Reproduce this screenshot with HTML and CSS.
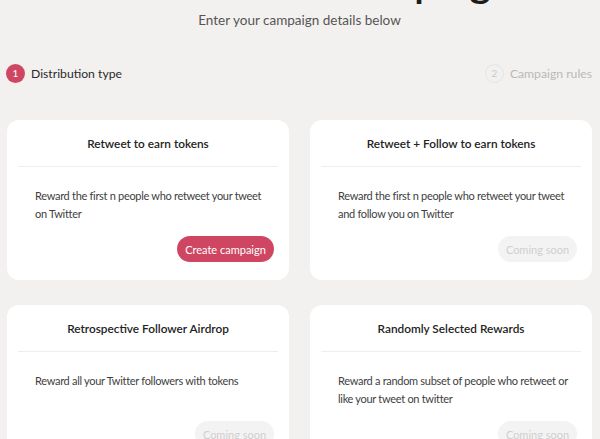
FILE: index.html
```html
<!DOCTYPE html>
<html>
<head>
<meta charset="utf-8">
<link rel="stylesheet" href="styles.css">
</head>
<body>
<main class="page">
  <h1 class="title">Create a new campaign</h1>
  <p class="subtitle">Enter your campaign details below</p>
  <div class="steps">
    <div class="step step-active"><span class="step-num">1</span><span class="step-label">Distribution type</span></div>
    <div class="step step-idle"><span class="step-num">2</span><span class="step-label">Campaign rules</span></div>
  </div>
  <section class="grid">
    <article class="card">
      <h2 class="card-title">Retweet to earn tokens</h2>
      <div class="card-body">
        <p class="card-text">Reward the first n people who retweet your tweet on Twitter</p>
        <button class="btn btn-primary">Create campaign</button>
      </div>
    </article>
    <article class="card">
      <h2 class="card-title">Retweet + Follow to earn tokens</h2>
      <div class="card-body">
        <p class="card-text">Reward the first n people who retweet your tweet and follow you on Twitter</p>
        <button class="btn btn-disabled">Coming soon</button>
      </div>
    </article>
    <article class="card">
      <h2 class="card-title">Retrospective Follower Airdrop</h2>
      <div class="card-body">
        <p class="card-text">Reward all your Twitter followers with tokens</p>
        <button class="btn btn-disabled">Coming soon</button>
      </div>
    </article>
    <article class="card">
      <h2 class="card-title">Randomly Selected Rewards</h2>
      <div class="card-body">
        <p class="card-text">Reward a random subset of people who retweet or like your tweet on twitter</p>
        <button class="btn btn-disabled">Coming soon</button>
      </div>
    </article>
  </section>
</main>
</body>
</html>
```
FILE: styles.css
```css
* { box-sizing: border-box; }
html, body { margin: 0; padding: 0; }
body {
  background: #f3f1ef;
  font-family: Lato, "Open Sans", sans-serif;
  color: #2b2b2b;
  overflow: hidden;
}
.page {
  padding: 0 8px 0 7px;
}
.title {
  margin: -44px 0 0;
  height: 55px;
  font-size: 42px;
  line-height: 50px;
  font-weight: 600;
  text-align: center;
  color: #1c1c1c;
  white-space: nowrap;
}
.subtitle {
  margin: 0;
  font-size: 13.5px;
  line-height: 18px;
  text-align: center;
  color: #555;
}
.steps {
  display: flex;
  justify-content: space-between;
  align-items: center;
  margin-top: 35px;
  height: 18px;
}
.step {
  display: flex;
  align-items: center;
  gap: 6px;
}
.step-num {
  width: 19px;
  height: 19px;
  border-radius: 50%;
  display: flex;
  align-items: center;
  justify-content: center;
  font-size: 10px;
}
.step-active .step-num {
  background: #cf4663;
  color: #fff;
  margin-left: -1px;
}
.step-active .step-label {
  font-size: 12.2px;
  color: #2a2a2a;
}
.step-idle .step-num {
  border: 1.5px solid #e6e4e3;
  color: #c9c9c9;
}
.step-idle .step-label {
  font-size: 12.2px;
  color: #b9b9b9;
}
.grid {
  display: grid;
  grid-template-columns: 1fr 1fr;
  column-gap: 21px;
  row-gap: 25px;
  margin-top: 38px;
}
.card {
  background: #fff;
  border-radius: 12px;
  height: 160px;
  display: flex;
  flex-direction: column;
}
.card-title {
  margin: 0 11px;
  height: 47px;
  padding-top: 16px;
  font-size: 11.8px;
  line-height: 16px;
  font-weight: 600;
  text-align: center;
  color: #222;
  border-bottom: 1px solid #efeeed;
}
.card-body {
  flex: 1;
  display: flex;
  flex-direction: column;
  padding: 20px 15px 18px 28px;
}
.card-text {
  margin: 0;
  font-size: 11px;
  letter-spacing: -0.3px;
  line-height: 18px;
  color: #3e3e3e;
  padding-right: 8px;
}
.btn {
  margin-top: auto;
  align-self: flex-end;
  height: 26px;
  border: none;
  border-radius: 13px;
  font-family: inherit;
  font-size: 11px;
  white-space: nowrap;
  padding: 0;
  text-align: center;
}
.btn-primary {
  background: #cf4663;
  color: #fff;
  width: 97px;
}
.btn-disabled {
  background: #f4f3f3;
  color: #cfcfcf;
  width: 79px;
}
```
